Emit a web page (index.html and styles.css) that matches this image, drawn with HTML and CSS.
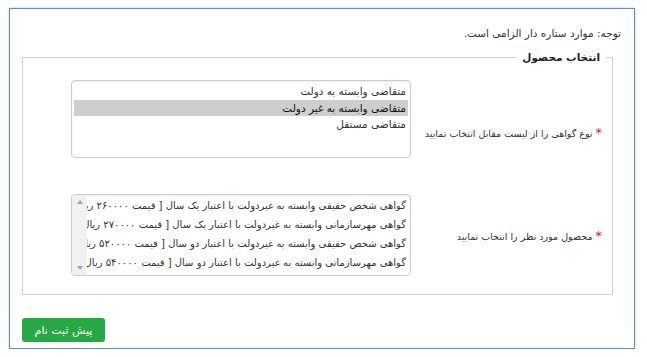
FILE: index.html
```html
<!DOCTYPE html>
<html lang="fa" dir="rtl">
<head>
  <meta charset="UTF-8"/>
  <title>پیش ثبت نام</title>
  <link rel="stylesheet" href="styles.css">
</head>
<body>

  <div class="panel">
    <p class="note">توجه: موارد ستاره دار الزامی است.</p>

    <fieldset class="product">
      <legend>انتخاب محصول</legend>

      <div class="row row-type">
        <label for="certType"><span class="req">*</span> نوع گواهی را از لیست مقابل انتخاب نمایید</label>
        <select id="certType" class="list list-type" size="4">
          <option>متقاضی وابسته به دولت</option>
          <option selected>متقاضی وابسته به غیر دولت</option>
          <option>متقاضی مستقل</option>
        </select>
      </div>

      <div class="row row-product">
        <label><span class="req">*</span> محصول مورد نظر را انتخاب نمایید</label>
        <div class="list list-product" role="listbox">
          <ul class="options">
            <li>گواهی شخص حقیقی وابسته به غیردولت با اعتبار یک سال [ قیمت ۲۶۰۰۰۰ ریال]</li>
            <li>گواهی مهرسازمانی وابسته به غیردولت با اعتبار یک سال [ قیمت ۲۷۰۰۰۰ ریال]</li>
            <li>گواهی شخص حقیقی وابسته به غیردولت با اعتبار دو سال [ قیمت ۵۲۰۰۰۰ ریال]</li>
            <li>گواهی مهرسازمانی وابسته به غیردولت با اعتبار دو سال [ قیمت ۵۴۰۰۰۰ ریال]</li>
          </ul>
          <div class="scrollbar">
            <span class="arrow up"></span>
            <span class="arrow down"></span>
          </div>
        </div>
      </div>
    </fieldset>

    <div class="actions">
      <button type="button" class="btn-submit">پیش ثبت نام</button>
    </div>
  </div>

</body>
</html>
```

FILE: styles.css
```css
body {
  margin: 0;
  font-family: "DejaVu Sans", sans-serif;
  font-size: 10.5px;
  color: #333;
  background: #fff;
}

.panel {
  margin: 8px 12px 0 9px;
  padding: 0 13px 6px 12px;
  border: 1px solid #5b8fd2;
  box-shadow: 0 0 2px rgba(0, 0, 0, 0.25);
}

.note {
  margin: 16px 0 10px;
  line-height: 16px;
}

.product {
  min-width: 0;
  margin: 0 8px 0 0;
  padding: 17px 10px 18px 48px;
  border: 1px solid #d0d0d0;
}

.product legend {
  margin-right: -4px;
  padding: 0 6px;
  font-weight: bold;
  color: #222;
}

.row {
  display: grid;
  grid-template-columns: 1fr 340px;
  align-items: center;
}

.row + .row {
  margin-top: 36px;
}

.row label {
  font-size: 9.5px;
  white-space: nowrap;
}

.row-type label {
  padding-top: 26px;
}

.req {
  color: #e02020;
  font-size: 13px;
}

.list {
  width: 340px;
  box-sizing: border-box;
  border: 1px solid #ccc;
  border-radius: 4px;
  box-shadow: inset 0 1px 2px rgba(0, 0, 0, 0.08);
  font-family: "DejaVu Sans", sans-serif;
  font-size: 10.5px;
  color: #333;
  background: #fff;
  direction: rtl;
  outline: none;
}

.list-type {
  height: 78px;
  padding: 2px;
}

.list-type option {
  padding: 2px;
  line-height: 15px;
}

.list-product {
  height: 82px;
  display: flex;
  overflow: hidden;
}

.options {
  flex: 1;
  min-width: 0;
  margin: 0;
  padding: 1px 2px 0 0;
  list-style: none;
  overflow: hidden;
  font-size: 10px;
}

.options li {
  padding: 2px;
  line-height: 15px;
  white-space: nowrap;
}

.scrollbar {
  width: 15px;
  display: flex;
  flex-direction: column;
  justify-content: space-between;
  align-items: center;
  padding: 5px 0;
  background: #f1f1f1;
}

.arrow {
  width: 0;
  height: 0;
  border-left: 3.5px solid transparent;
  border-right: 3.5px solid transparent;
}

.arrow.up {
  border-bottom: 4px solid #a3a3a3;
}

.arrow.down {
  border-top: 4px solid #a3a3a3;
}

.actions {
  margin-top: 23px;
  text-align: left;
}

.btn-submit {
  width: 83px;
  height: 24px;
  padding: 0;
  border: none;
  border-radius: 3px;
  background: #28a745;
  color: #fff;
  font-family: "DejaVu Sans", sans-serif;
  font-size: 11px;
  cursor: pointer;
}

.btn-submit:hover {
  background: #218838;
}
```
